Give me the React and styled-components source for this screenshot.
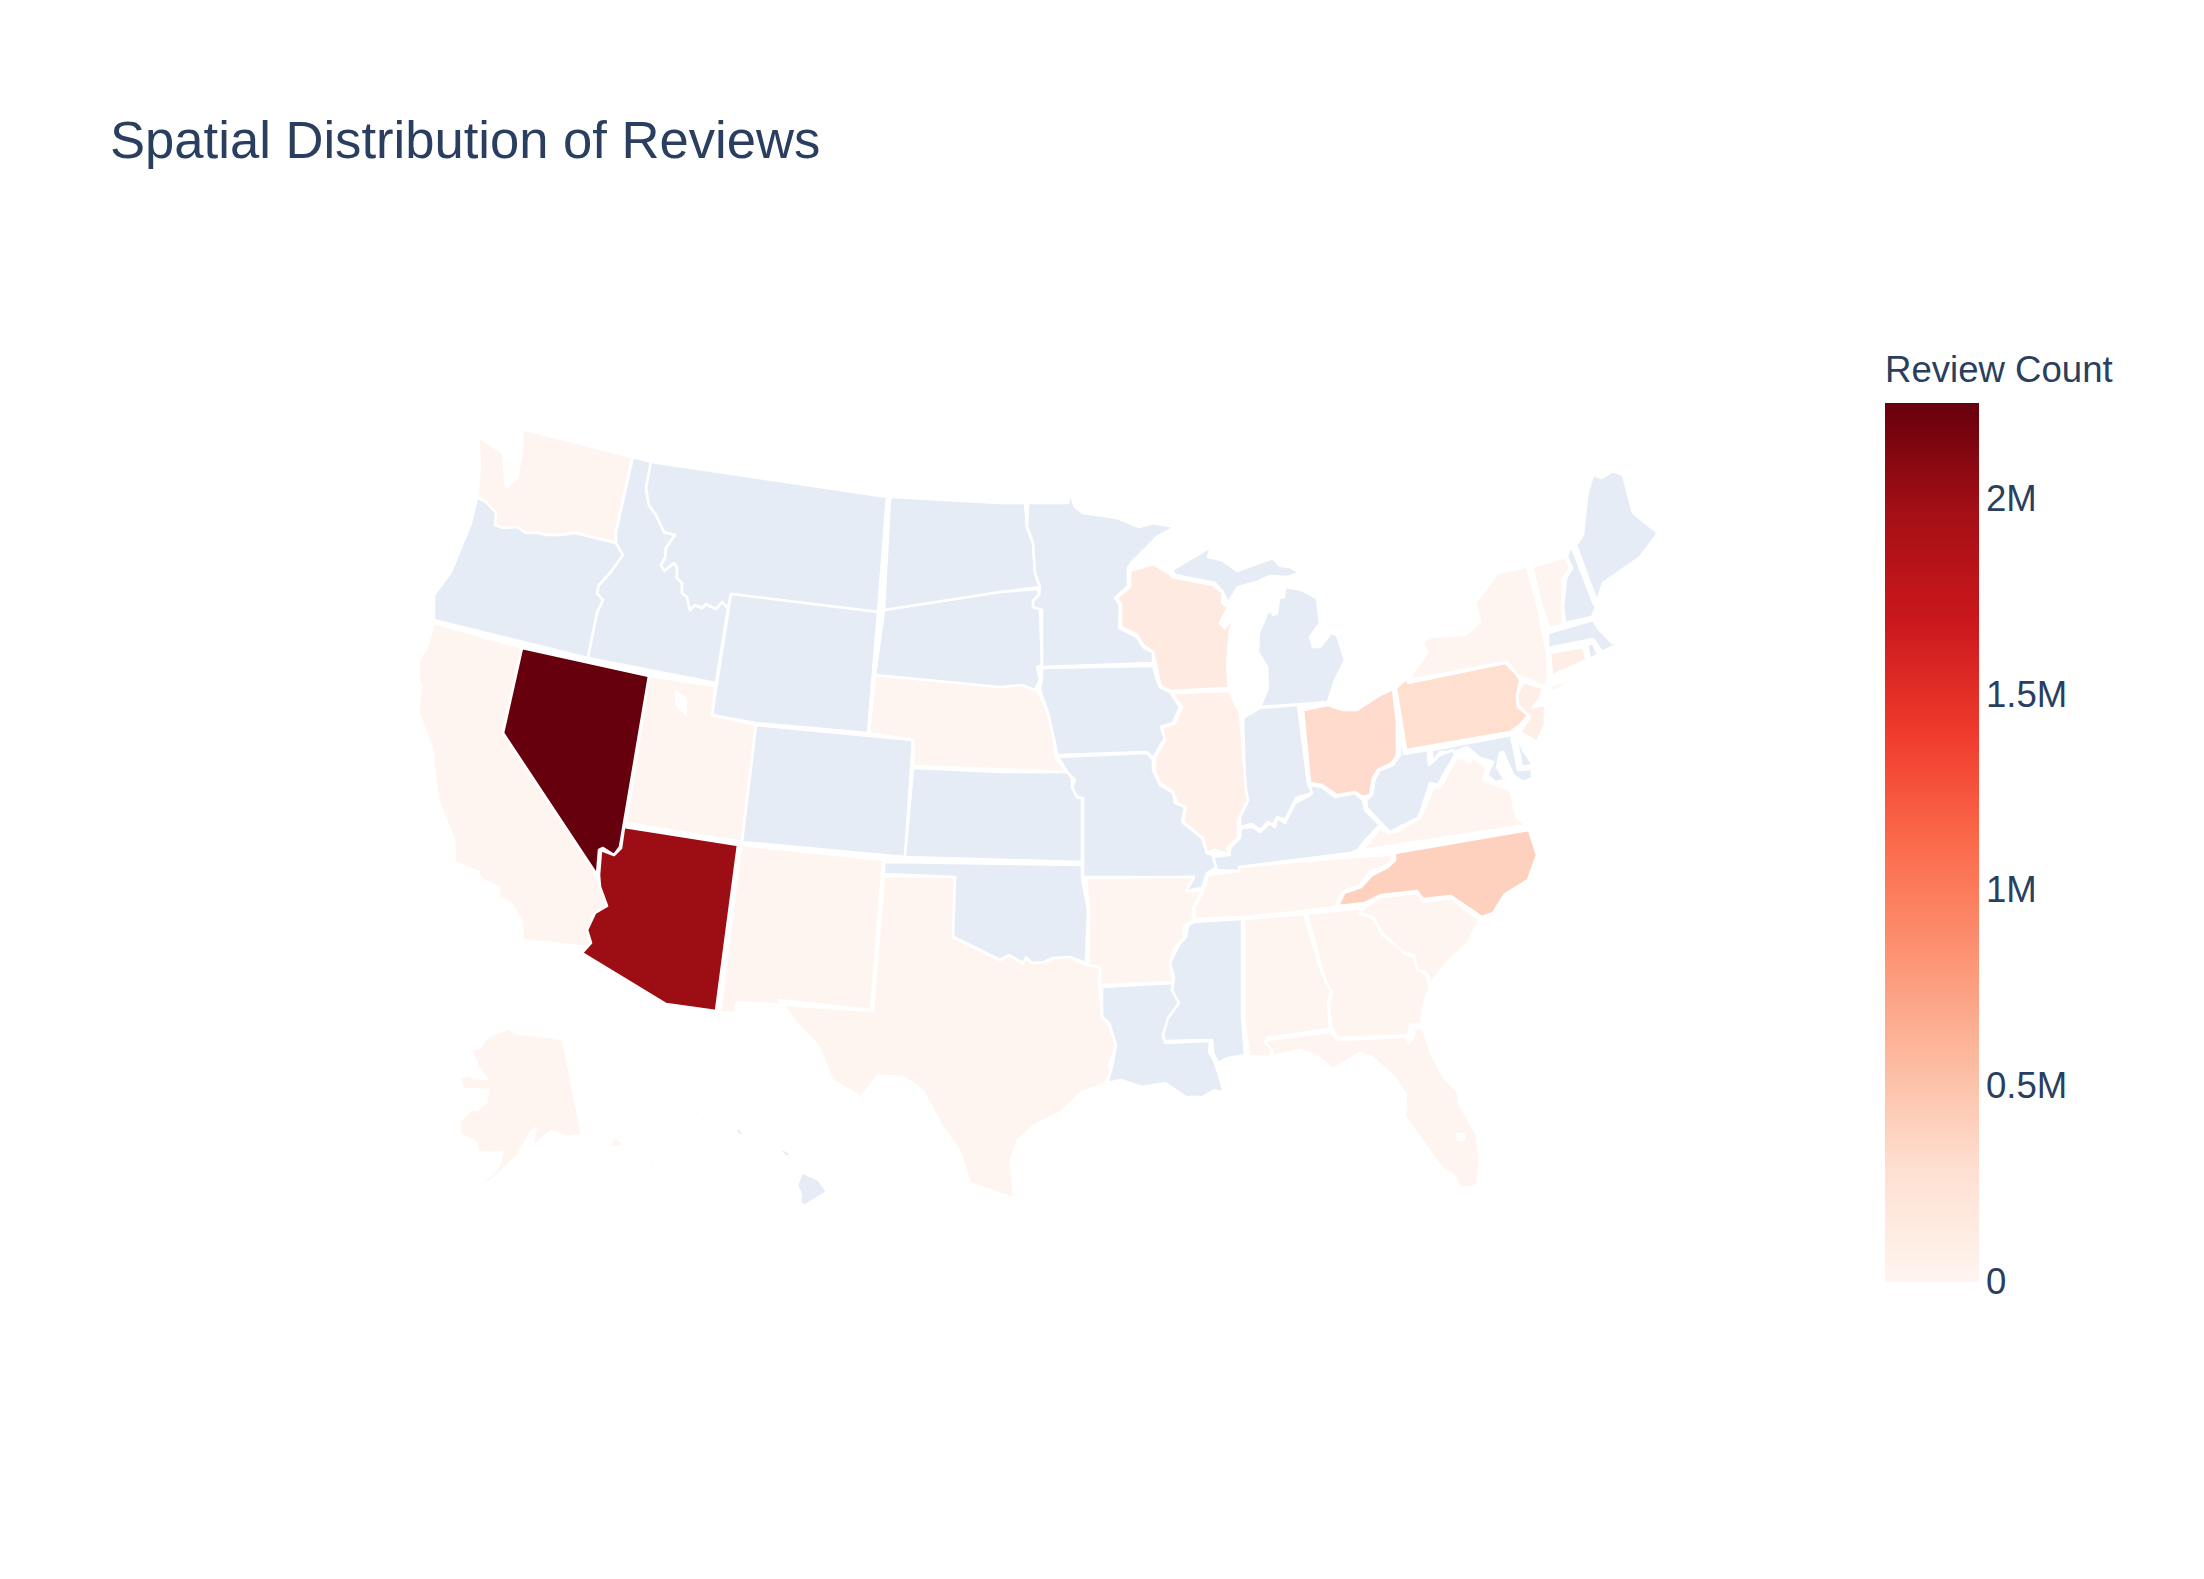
import styled, { createGlobalStyle } from "styled-components";

const GlobalStyle = createGlobalStyle`
  body {
    margin: 0;
    background: #fff;
    font-family: "Liberation Sans", Arial, sans-serif;
    color: #2a3f5f;
  }
`;

const Page = styled.div`
  width: 2204px;
  height: 1579px;
  overflow: hidden;
`;

const Title = styled.h1`
  margin: 0;
  padding: 110px 0 0 110px;
  font-size: 52.6px;
  line-height: 60px;
  font-weight: 400;
`;

const ChartRow = styled.div`
  display: flex;
  margin-top: 179px;
  padding-left: 420px;
  gap: 205px;
`;

const MapSvg = styled.svg`
  display: block;
  width: 1260px;
  height: 800px;
  margin-top: 71px;
  flex: none;
`;

const State = styled.polygon`
  fill: ${(props) => props.$tone};
  stroke: #fff;
  stroke-width: 2.6;
  stroke-linejoin: round;
`;

const Lake = styled.polygon`
  fill: #fff;
`;

const Legend = styled.div`
  display: flex;
  flex-direction: column;
  gap: 12px;
`;

const LegendTitle = styled.div`
  font-size: 36.6px;
  line-height: 42px;
  white-space: nowrap;
`;

const BarRow = styled.div`
  display: flex;
  gap: 7px;
`;

const Bar = styled.div`
  width: 94px;
  height: 879px;
  background: linear-gradient(
    to top,
    rgb(255, 245, 240) 0%,
    rgb(254, 224, 210) 12.5%,
    rgb(252, 187, 161) 25%,
    rgb(252, 146, 114) 37.5%,
    rgb(251, 106, 74) 50%,
    rgb(239, 59, 44) 62.5%,
    rgb(203, 24, 29) 75%,
    rgb(165, 15, 21) 87.5%,
    rgb(103, 0, 13) 100%
  );
`;

const TickList = styled.div`
  display: grid;
  grid-auto-rows: 195.75px;
  margin-top: -2px;
  height: 879px;
`;

const Tick = styled.div`
  display: flex;
  align-items: center;
  font-size: 36.6px;
`;

const NONE = "#e5ecf6";
const BASE = "#fff5f0";

const STATES = [
  { id: "WA", tone: BASE, pts: ["478,437 503,453 506,487 517,478 522,450 522,429 632,457 616,532 616,543 575,533 561,535 547,535 538,533 526,533 517,527 503,528 495,525 496,513 486,502 477,497 480,467"] },
  { id: "OR", tone: NONE, pts: ["477,497 486,502 496,513 495,525 503,528 517,527 526,533 538,533 547,535 561,535 575,533 616,543 623,555 610,573 599,585 597,593 603,600 597,613 588,658 434,620 434,595 451,572 471,523"] },
  { id: "ID", tone: NONE, pts: ["633,457 651,462 646,488 649,505 656,515 664,532 675,535 666,548 665,558 661,565 664,571 674,563 677,567 677,578 682,583 682,593 687,597 690,610 695,605 702,608 706,604 716,609 722,602 728,608 716,683 588,658 597,613 603,600 597,593 599,585 610,573 623,555 616,543 616,532"] },
  { id: "MT", tone: NONE, pts: ["651,462 887,497 878,612 731,594 728,608 722,602 716,609 706,604 702,608 695,605 690,610 687,597 682,593 682,583 677,578 677,567 674,563 664,571 661,565 665,558 666,548 675,535 664,532 656,515 649,505 646,488"] },
  { id: "WY", tone: NONE, pts: ["731,594 878,612 868,733 756,723 712,715"] },
  { id: "CA", tone: BASE, pts: ["434,623 522,648 503,733 597,875 600,887 607,906 595,913 587,930 591,943 582,953 587,947 522,940 522,923 511,903 499,897 499,887 482,880 478,872 455,862 454,840 438,800 433,760 434,753 418,712 421,687 415,667 427,647"] },
  { id: "UT", tone: BASE, pts: ["649,676 715,686 712,715 756,725 742,842 626,823"] },
  { id: "CO", tone: NONE, pts: ["756,725 913,740 905,857 742,842"] },
  { id: "NM", tone: BASE, pts: ["741,845 883,860 871,1010 779,1000 783,1005 737,1002 735,1013 720,1012"] },
  { id: "TX", tone: BASE, pts: ["884,876 955,877 953,937 970,945 1000,960 1009,955 1023,963 1026,957 1032,963 1044,962 1053,958 1070,957 1086,965 1100,967 1099,983 1102,1017 1109,1023 1116,1045 1109,1067 1112,1073 1103,1085 1082,1092 1060,1113 1035,1125 1018,1140 1011,1160 1014,1198 1000,1194 970,1183 959,1150 943,1128 922,1090 903,1077 878,1076 861,1097 832,1080 819,1047 798,1025 783,1005 873,1011"] },
  { id: "OK", tone: NONE, pts: ["884,862 1082,865 1082,878 1088,910 1086,963 1070,957 1053,958 1044,962 1032,963 1026,957 1023,963 1009,955 1000,960 970,945 953,937 955,877 884,874"] },
  { id: "KS", tone: NONE, pts: ["913,768 1000,772 1067,772 1072,778 1072,787 1077,797 1082,798 1082,862 905,857"] },
  { id: "NE", tone: BASE, pts: ["875,675 1000,687 1022,685 1035,690 1039,693 1048,713 1055,743 1055,757 1067,772 913,766 913,740 869,733"] },
  { id: "SD", tone: NONE, pts: ["884,610 1000,592 1038,589 1039,595 1033,601 1035,607 1040,610 1042,665 1037,667 1040,680 1035,690 1022,685 1000,687 875,675"] },
  { id: "ND", tone: NONE, pts: ["890,497 1000,503 1025,503 1027,527 1033,543 1035,573 1040,587 1000,592 884,610"] },
  { id: "MN", tone: NONE, pts: ["1028,503 1068,503 1070,493 1075,507 1083,513 1117,518 1139,527 1153,523 1175,527 1157,537 1132,562 1128,568 1128,586 1115,598 1120,605 1119,628 1137,637 1143,647 1153,652 1153,663 1042,667 1042,610 1033,607 1033,601 1039,595 1040,587 1035,573 1033,543 1027,527"] },
  { id: "IA", tone: NONE, pts: ["1042,668 1153,666 1157,680 1160,687 1170,692 1180,707 1173,723 1161,727 1165,738 1155,755 1153,758 1147,752 1057,755 1055,743 1048,713 1040,690 1042,677"] },
  { id: "MO", tone: NONE, pts: ["1058,757 1147,753 1153,760 1153,770 1160,785 1173,793 1175,803 1185,807 1182,822 1202,838 1207,853 1213,855 1217,867 1207,873 1202,888 1186,891 1194,877 1083,877 1083,798 1077,797 1072,787 1075,780 1068,773"] },
  { id: "AR", tone: BASE, pts: ["1086,878 1194,877 1186,891 1202,891 1193,908 1193,920 1184,927 1184,938 1174,948 1170,963 1174,982 1100,985 1100,967 1088,965 1089,910"] },
  { id: "LA", tone: NONE, pts: ["1102,987 1174,983 1172,990 1179,1003 1168,1020 1163,1035 1165,1043 1210,1041 1209,1052 1214,1060 1219,1075 1224,1093 1214,1090 1203,1097 1186,1097 1165,1083 1142,1087 1121,1080 1107,1083 1112,1067 1116,1045 1109,1023 1102,1017"] },
  { id: "MS", tone: NONE, pts: ["1194,922 1242,919 1242,1017 1245,1055 1228,1058 1218,1063 1213,1053 1212,1040 1165,1041 1163,1035 1168,1018 1179,1003 1172,990 1174,977 1170,963 1179,945 1186,937 1188,925"] },
  { id: "AL", tone: BASE, pts: ["1244,919 1304,914 1321,970 1331,992 1328,1003 1330,1029 1267,1038 1272,1050 1270,1057 1249,1056 1244,1017"] },
  { id: "GA", tone: BASE, pts: ["1307,914 1361,908 1360,913 1374,919 1382,935 1402,948 1403,953 1414,957 1419,970 1426,975 1430,987 1424,1003 1421,1024 1410,1025 1409,1035 1338,1038 1331,1027 1329,1003 1332,992 1324,977"] },
  { id: "SC", tone: BASE, pts: ["1365,907 1381,897 1417,893 1423,902 1451,898 1479,920 1468,943 1447,962 1431,983 1426,972 1417,970 1414,955 1403,952 1382,933 1374,918 1361,913"] },
  { id: "NC", tone: "#fdd1bd", pts: ["1529,830 1537,855 1528,880 1505,894 1493,913 1482,917 1451,896 1423,899 1417,891 1381,895 1365,903 1338,906 1344,893 1361,887 1372,875 1388,867 1395,860 1395,853"] },
  { id: "TN", tone: BASE, pts: ["1391,855 1393,860 1384,867 1370,872 1360,885 1342,892 1336,907 1305,911 1242,917 1195,919 1194,908 1203,892 1208,875 1239,871 1239,867 1351,857"] },
  { id: "KY", tone: NONE, pts: ["1217,870 1213,857 1228,855 1231,847 1240,838 1241,828 1253,827 1260,832 1270,823 1275,827 1277,818 1285,823 1295,803 1310,795 1310,785 1322,787 1335,797 1355,793 1363,800 1365,810 1380,825 1363,843 1358,850 1351,853 1239,867 1239,871"] },
  { id: "IN", tone: NONE, pts: ["1243,718 1260,708 1298,705 1308,783 1312,793 1296,798 1285,820 1277,817 1273,825 1268,822 1260,830 1252,824 1240,827 1240,817 1248,800 1245,790"] },
  { id: "IL", tone: "#fff0e9", pts: ["1172,693 1229,691 1240,713 1246,790 1248,800 1238,820 1238,838 1227,848 1230,855 1215,850 1207,853 1203,838 1183,822 1186,807 1177,803 1173,792 1160,783 1155,772 1155,758 1165,740 1162,728 1175,723 1182,707"] },
  { id: "WI", tone: "#feeae1", pts: ["1130,571 1153,564 1170,574 1172,577 1213,585 1223,593 1222,603 1228,607 1220,623 1225,628 1235,615 1230,630 1227,667 1229,688 1170,691 1160,685 1157,668 1153,652 1143,645 1137,635 1121,627 1121,604 1117,598 1130,587"] },
  { id: "MI", tone: NONE, pts: [
    "1211,547 1208,557 1222,560 1237,571 1273,558 1280,566 1290,567 1300,573 1287,577 1270,576 1257,582 1238,587 1228,603 1223,592 1215,583 1175,575 1172,570",
    "1285,587 1302,590 1317,598 1320,623 1310,637 1313,647 1320,647 1331,633 1337,635 1345,660 1335,680 1328,702 1302,704 1260,707 1268,688 1267,667 1258,652 1259,633 1267,613 1272,610 1273,615 1277,613 1279,598 1284,597",
  ] },
  { id: "OH", tone: "#fedbcc", pts: ["1303,710 1328,705 1343,710 1357,710 1380,695 1393,689 1397,723 1397,755 1392,763 1378,770 1373,778 1370,795 1363,797 1355,792 1337,795 1322,785 1310,783"] },
  { id: "PA", tone: "#fedfd0", pts: ["1396,688 1407,678 1408,683 1505,663 1515,672 1520,680 1517,697 1518,707 1528,715 1520,725 1510,732 1406,750"] },
  { id: "NY", tone: BASE, pts: [
    "1410,677 1427,653 1423,642 1430,637 1465,635 1480,622 1475,603 1498,573 1527,567 1538,607 1547,653 1548,680 1545,687 1517,675 1507,662 1410,680",
    "1550,686 1583,676 1553,692",
  ] },
  { id: "NJ", tone: "#ffeee7", pts: ["1523,682 1543,688 1540,698 1533,707 1545,705 1545,725 1537,742 1520,732 1530,717 1518,705 1517,695"] },
  { id: "CT", tone: "#ffeee6", pts: ["1550,653 1583,647 1587,660 1557,673 1552,677"] },
  { id: "RI", tone: NONE, pts: ["1587,645 1593,643 1598,655 1590,659"] },
  { id: "MA", tone: NONE, pts: ["1548,633 1593,620 1598,628 1612,643 1622,642 1602,652 1593,639 1548,648"] },
  { id: "VT", tone: BASE, pts: ["1532,567 1565,557 1570,568 1563,578 1562,607 1563,625 1549,628 1542,607"] },
  { id: "NH", tone: NONE, pts: ["1569,548 1573,550 1593,602 1596,607 1592,617 1565,623 1563,607 1566,578 1572,568 1567,557"] },
  { id: "ME", tone: NONE, pts: ["1593,475 1602,478 1613,471 1623,475 1633,513 1658,533 1640,557 1603,583 1597,602 1576,545 1583,535 1587,495"] },
  { id: "MD", tone: NONE, pts: ["1432,750 1511,735 1518,770 1532,769 1532,778 1523,782 1513,775 1503,752 1500,753 1497,767 1505,780 1495,782 1487,775 1493,762 1480,758 1467,747 1455,752 1440,752 1432,763"] },
  { id: "DE", tone: NONE, pts: ["1515,732 1523,750 1533,765 1522,767"] },
  { id: "WV", tone: NONE, pts: ["1399,727 1404,754 1428,750 1429,765 1440,755 1453,750 1455,755 1445,772 1438,785 1430,783 1422,808 1418,818 1400,827 1390,832 1380,822 1367,808 1366,800 1372,795 1375,778 1380,770 1393,765 1400,755"] },
  { id: "VA", tone: BASE, pts: [
    "1457,757 1470,762 1473,758 1487,767 1483,780 1510,790 1517,818 1527,825 1363,850 1380,828 1388,833 1400,830 1420,818 1425,808 1433,788 1440,788 1448,773",
    "1527,790 1532,780 1530,790",
  ] },
  { id: "FL", tone: BASE, pts: ["1267,1040 1331,1032 1338,1040 1407,1037 1409,1043 1414,1037 1414,1028 1423,1028 1431,1053 1444,1078 1458,1092 1459,1103 1477,1135 1480,1162 1477,1185 1468,1188 1459,1187 1454,1175 1442,1168 1405,1117 1406,1095 1395,1078 1372,1057 1360,1053 1333,1069 1317,1056 1300,1050 1272,1056 1272,1050 1265,1042"] },
  { id: "AK", tone: BASE, pts: [
    "509,1028 515,1033 563,1039 582,1135 568,1137 551,1131 532,1147 536,1128 530,1133 517,1157 488,1183 457,1195 480,1185 498,1168 503,1152 492,1153 477,1152 477,1143 471,1140 461,1135 459,1122 471,1109 477,1110 486,1103 488,1090 463,1089 459,1078 471,1074 473,1078 487,1079 478,1067 471,1049 480,1048 487,1037",
    "609,1148 614,1137 626,1145",
    "645,1162 654,1163 656,1169",
    "517,1175 524,1168 522,1172",
    "582,1135 588,1136 601,1143 588,1140",
  ] },
  { id: "HI", tone: NONE, pts: [
    "802,1172 819,1180 827,1192 804,1206 800,1202 801,1195 797,1185",
    "778,1149 785,1150 792,1155 786,1157",
    "735,1130 739,1128 745,1135 738,1135",
    "692,1113 699,1112 699,1117",
  ] },
  { id: "NV", tone: "#67000d", pts: ["522,648 649,676 620,847 614,855 603,848 599,850 597,875 503,733"] },
  { id: "AZ", tone: "#9c0d14", pts: ["624,827 738,845 716,1011 666,1004 582,953 591,943 587,930 595,913 607,906 600,887 599,875 601,850 614,855 621,848"] },
];

const LAKES = [
  "675,690 687,698 687,717 675,705",
  "1456,1133 1465,1133 1465,1141 1457,1141",
];

const TICKS = ["2M", "1.5M", "1M", "0.5M", "0"];

const UsaMap = () => (
  <MapSvg viewBox="420 420 1260 800">
    {STATES.map((state) =>
      state.pts.map((points, i) => (
        <State key={state.id + i} $tone={state.tone} points={points} />
      ))
    )}
    {LAKES.map((points) => (
      <Lake key={points} points={points} />
    ))}
  </MapSvg>
);

export default function App() {
  return (
    <Page>
      <GlobalStyle />
      <Title>Spatial Distribution of Reviews</Title>
      <ChartRow>
        <UsaMap />
        <Legend>
          <LegendTitle>Review Count</LegendTitle>
          <BarRow>
            <Bar />
            <TickList>
              {TICKS.map((tick) => (
                <Tick key={tick}>{tick}</Tick>
              ))}
            </TickList>
          </BarRow>
        </Legend>
      </ChartRow>
    </Page>
  );
}
